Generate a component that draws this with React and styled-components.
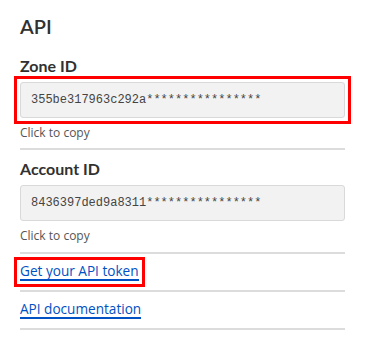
import React from "react";
import styled, { createGlobalStyle, css } from "styled-components";

const Global = createGlobalStyle`
  html, body { margin: 0; padding: 0; background: #ffffff; }
  body { font-family: "Lato", "Open Sans", sans-serif; color: #333333; }
`;

const Panel = styled.section`
  width: 325px;
  padding: 14px 20px 0 20px;
  display: flex;
  flex-direction: column;
`;

const Title = styled.h2`
  margin: 0;
  font-family: "Lato", sans-serif;
  font-size: 20px;
  line-height: 24px;
  font-weight: 600;
  color: #313131;
`;

const Field = styled.div`
  display: flex;
  flex-direction: column;
  padding-top: ${(p) => p.$top}px;
  border-bottom: 2px solid #dcdcdc;
`;

const Label = styled.h3`
  margin: 0;
  font-family: "Lato", sans-serif;
  font-size: 16px;
  line-height: 20px;
  font-weight: 700;
  color: #313131;
`;

const highlight = css`
  border: 3px solid #ff0000;
  padding: 3px;
  margin-left: -6px;
  margin-right: -6px;
`;

const Frame = styled.div`
  margin-top: ${(p) => (p.$highlight ? 0 : 6)}px;
  margin-bottom: ${(p) => (p.$highlight ? -6 : 0)}px;
  ${(p) => p.$highlight && highlight}
`;

const CopyBox = styled.div`
  height: 34px;
  border: 1px solid #d9d9d9;
  border-radius: 3px;
  background: #f2f2f2;
  display: flex;
  align-items: center;
  padding: 0 10px;
  font-family: "Liberation Mono", "Courier New", monospace;
  font-size: 12px;
  color: #444444;
  cursor: pointer;
`;

const Hint = styled.div`
  margin-top: 7px;
  margin-bottom: ${(p) => p.$bottom}px;
  font-family: "Open Sans", sans-serif;
  font-size: 12px;
  line-height: 16px;
  color: #555555;
`;

const LinkRow = styled.div`
  height: 36px;
  display: flex;
  align-items: flex-end;
  border-bottom: 2px solid #dcdcdc;
`;

const LinkFrame = styled.span`
  display: inline-flex;
  margin-bottom: ${(p) => (p.$highlight ? 3 : 9)}px;
  ${(p) => p.$highlight && highlight}
  ${(p) => p.$highlight && css`margin-right: 0;`}
`;

const Link = styled.a`
  display: inline-block;
  font-family: "Open Sans", sans-serif;
  font-size: 13.6px;
  line-height: 16px;
  color: #0051c3;
  text-decoration: none;
  border-bottom: 2px solid #0051c3;
`;

const fields = [
  { label: "Zone ID", value: "355be317963c292a****************", highlight: true, top: 18, bottom: 7 },
  { label: "Account ID", value: "8436397ded9a8311****************", highlight: false, top: 9, bottom: 8 },
];

const links = [
  { text: "Get your API token", highlight: true },
  { text: "API documentation", highlight: false },
];

export default function App() {
  return (
    <>
      <Global />
      <Panel>
        <Title>API</Title>
        {fields.map((f) => (
          <Field key={f.label} $top={f.top}>
            <Label>{f.label}</Label>
            <Frame $highlight={f.highlight}>
              <CopyBox>{f.value}</CopyBox>
            </Frame>
            <Hint $bottom={f.bottom}>Click to copy</Hint>
          </Field>
        ))}
        {links.map((l) => (
          <LinkRow key={l.text}>
            <LinkFrame $highlight={l.highlight}>
              <Link href="#">{l.text}</Link>
            </LinkFrame>
          </LinkRow>
        ))}
      </Panel>
    </>
  );
}
